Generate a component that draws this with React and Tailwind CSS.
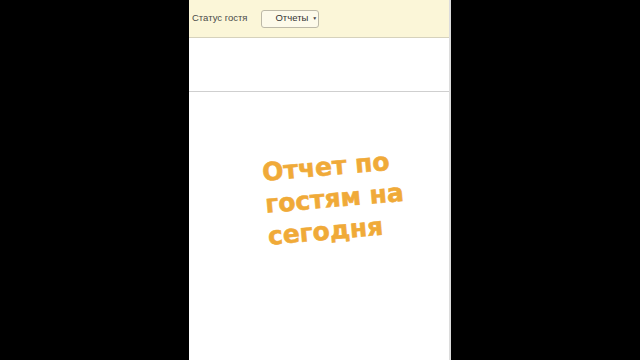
export default function App() {
  return (
    <div className="flex h-[360px] w-[640px] justify-center bg-black font-['Liberation_Sans',Arial,sans-serif]">
      <div className="flex w-[262px] flex-col border-r-2 border-[#dcdcdc] bg-white">
        {/* Top toolbar */}
        <div className="flex h-[38px] items-center gap-[14px] border-b border-[#d6d2bc] bg-[#fbf6d8] pl-[3px]">
          <span className="text-[9.5px] text-[#4a4a4a]">Статус гостя</span>
          <button
            type="button"
            className="flex h-[18px] w-[58px] items-center gap-[4px] rounded-[3px] border border-[#bdb9a8] bg-[#fdfaea] pl-[13px] text-[9.5px] text-[#333]"
          >
            Отчеты
            <span className="text-[5px] text-[#444]">▼</span>
          </button>
        </div>

        {/* Empty header row */}
        <div className="h-[54px] border-b border-[#cfcfcf] bg-white" />

        {/* Overlay caption */}
        <div className="flex-1 bg-white pl-[72px] pt-[65px]">
          <p className="w-fit origin-top-left -rotate-[5deg] font-['DejaVu_Sans',Verdana,sans-serif] text-[25px] font-bold leading-[32px] text-[#f0aa38] [-webkit-text-stroke:0.6px_#f0aa38]">
            Отчет по
            <br />
            гостям на
            <br />
            сегодня
          </p>
        </div>
      </div>
    </div>
  )
}
